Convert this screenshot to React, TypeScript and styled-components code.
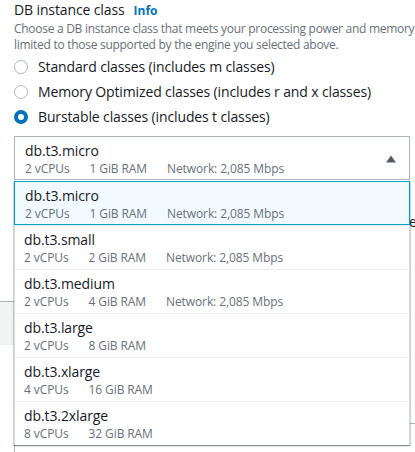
import React from "react";
import styled, { createGlobalStyle } from "styled-components";

const Global = createGlobalStyle`
  html, body { margin: 0; padding: 0; background: #ffffff; }
  body { font-family: "Open Sans", "Noto Sans", Arial, sans-serif; color: #16191f; overflow: hidden; }
  * { box-sizing: border-box; }
`;

const Page = styled.div`
  width: 415px;
  height: 452px;
  overflow: hidden;
  position: relative;
`;

const Section = styled.div`
  padding: 0 0 0 14px;
`;

const TitleRow = styled.div`
  display: flex;
  align-items: baseline;
  gap: 9px;
  height: 20px;
  line-height: 20px;
`;

const Title = styled.span`
  font-size: 14px;
  letter-spacing: -0.12px;
  color: #16191f;
`;

const InfoLink = styled.span`
  font-size: 12px;
  font-weight: 700;
  color: #0073bb;
`;

const Desc = styled.div`
  font-size: 12px;
  line-height: 16px;
  letter-spacing: -0.28px;
  color: #687078;
  white-space: nowrap;
  margin-top: 1px;
`;

const RadioGroup = styled.div`
  display: flex;
  flex-direction: column;
  margin-top: 1px;
`;

const RadioRow = styled.div`
  display: flex;
  align-items: center;
  gap: 10px;
  height: 25px;
  font-size: 14px;
  letter-spacing: -0.13px;
  color: #16191f;
`;

const RadioDot = styled.span<{ $checked?: boolean }>`
  width: 14px;
  height: 14px;
  border-radius: 50%;
  flex: none;
  background: #fff;
  border: ${(p) => (p.$checked ? "4.5px solid #0073bb" : "1.5px solid #aab7b8")};
`;

const SelectWrap = styled.div`
  position: relative;
  margin-top: 7px;
  width: 396px;
`;

const SelectBox = styled.div`
  height: 44px;
  border: 1px solid #aab7b8;
  padding: 4px 12px 2px 10px;
  display: flex;
  align-items: flex-start;
  background: #fff;
`;

const OptionBody = styled.div`
  flex: 1;
  display: flex;
  flex-direction: column;
`;

const OptionName = styled.div`
  font-size: 14px;
  line-height: 20px;
  letter-spacing: -0.1px;
  color: #16191f;
`;

const Meta = styled.div`
  display: flex;
  gap: 20px;
  font-size: 12px;
  line-height: 16px;
  letter-spacing: -0.1px;
  color: #687078;
  white-space: nowrap;
`;

const Caret = styled.svg`
  margin-top: 14px;
  flex: none;
`;

const Menu = styled.div`
  position: absolute;
  left: 0;
  top: 45px;
  width: 396px;
  background: #fff;
  border-left: 1px solid #d5dbdb;
  border-right: 1px solid #d5dbdb;
  box-shadow: 0 1px 1px 0 rgba(0, 28, 36, 0.3), 1px 1px 1px 0 rgba(0, 28, 36, 0.15),
    -1px 1px 1px 0 rgba(0, 28, 36, 0.15);
  z-index: 10;
`;

const MenuItem = styled.div<{ $active?: boolean }>`
  height: 44px;
  padding: 4px 10px 2px 10px;
  margin: 0 ${(p) => (p.$active ? "-1px" : "0")};
  border: ${(p) => (p.$active ? "1px solid #00a1c9" : "none")};
  border-top: ${(p) => (p.$active ? "1px solid #00a1c9" : "1px solid #eaeded")};
  background: ${(p) => (p.$active ? "#f1faff" : "#fff")};
  padding-left: ${(p) => (p.$active ? "10px" : "9px")};
  &:first-child {
    border-top: ${(p) => (p.$active ? "1px solid #00a1c9" : "none")};
  }
`;

const Backdrop = styled.div`
  display: flex;
  flex-direction: column;
`;

const TileRow = styled.div`
  margin-top: 11px;
  margin-left: 395px;
  height: 60px;
  display: flex;
  align-items: center;
  border-top: 1px solid #00a1c9;
  border-bottom: 1px solid #00a1c9;
  background: #f1faff;
  font-size: 14px;
  color: #16191f;
`;

const TableHead = styled.div`
  margin-top: 50px;
  margin-left: -14px;
  height: 44px;
  border-top: 1px solid #aab7b8;
  border-bottom: 1px solid #eaeded;
  background: #f2f3f3;
`;

const InputBox = styled.div`
  margin-top: 78px;
  height: 40px;
  width: 420px;
  border: 1px solid #aab7b8;
`;

type Opt = { name: string; cpu: string; ram: string; net?: string };

const options: Opt[] = [
  { name: "db.t3.micro", cpu: "2 vCPUs", ram: "1 GiB RAM", net: "Network: 2,085 Mbps" },
  { name: "db.t3.small", cpu: "2 vCPUs", ram: "2 GiB RAM", net: "Network: 2,085 Mbps" },
  { name: "db.t3.medium", cpu: "2 vCPUs", ram: "4 GiB RAM", net: "Network: 2,085 Mbps" },
  { name: "db.t3.large", cpu: "2 vCPUs", ram: "8 GiB RAM" },
  { name: "db.t3.xlarge", cpu: "4 vCPUs", ram: "16 GiB RAM" },
  { name: "db.t3.2xlarge", cpu: "8 vCPUs", ram: "32 GiB RAM" },
];

const OptionContent: React.FC<{ o: Opt }> = ({ o }) => (
  <OptionBody>
    <OptionName>{o.name}</OptionName>
    <Meta>
      <span>{o.cpu}</span>
      <span>{o.ram}</span>
      {o.net && <span>{o.net}</span>}
    </Meta>
  </OptionBody>
);

export default function App() {
  return (
    <Page>
      <Global />
      <Section>
        <TitleRow>
          <Title>DB instance class</Title>
          <InfoLink>Info</InfoLink>
        </TitleRow>
        <Desc>
          Choose a DB instance class that meets your processing power and memory requirements. The DB instance class options are
          <br />
          limited to those supported by the engine you selected above.
        </Desc>
        <RadioGroup>
          <RadioRow>
            <RadioDot />
            Standard classes (includes m classes)
          </RadioRow>
          <RadioRow>
            <RadioDot />
            Memory Optimized classes (includes r and x classes)
          </RadioRow>
          <RadioRow>
            <RadioDot $checked />
            Burstable classes (includes t classes)
          </RadioRow>
        </RadioGroup>
        <SelectWrap>
          <SelectBox>
            <OptionContent o={options[0]} />
            <Caret width="12" height="8" viewBox="0 0 12 8">
              <path d="M1 7.5 L6 0.5 L11 7.5 Z" fill="#545b64" />
            </Caret>
          </SelectBox>
          <Menu>
            {options.map((o, i) => (
              <MenuItem key={o.name} $active={i === 0}>
                <OptionContent o={o} />
              </MenuItem>
            ))}
          </Menu>
          <Backdrop>
            <TileRow>er</TileRow>
            <TableHead />
            <InputBox />
          </Backdrop>
        </SelectWrap>
      </Section>
    </Page>
  );
}
